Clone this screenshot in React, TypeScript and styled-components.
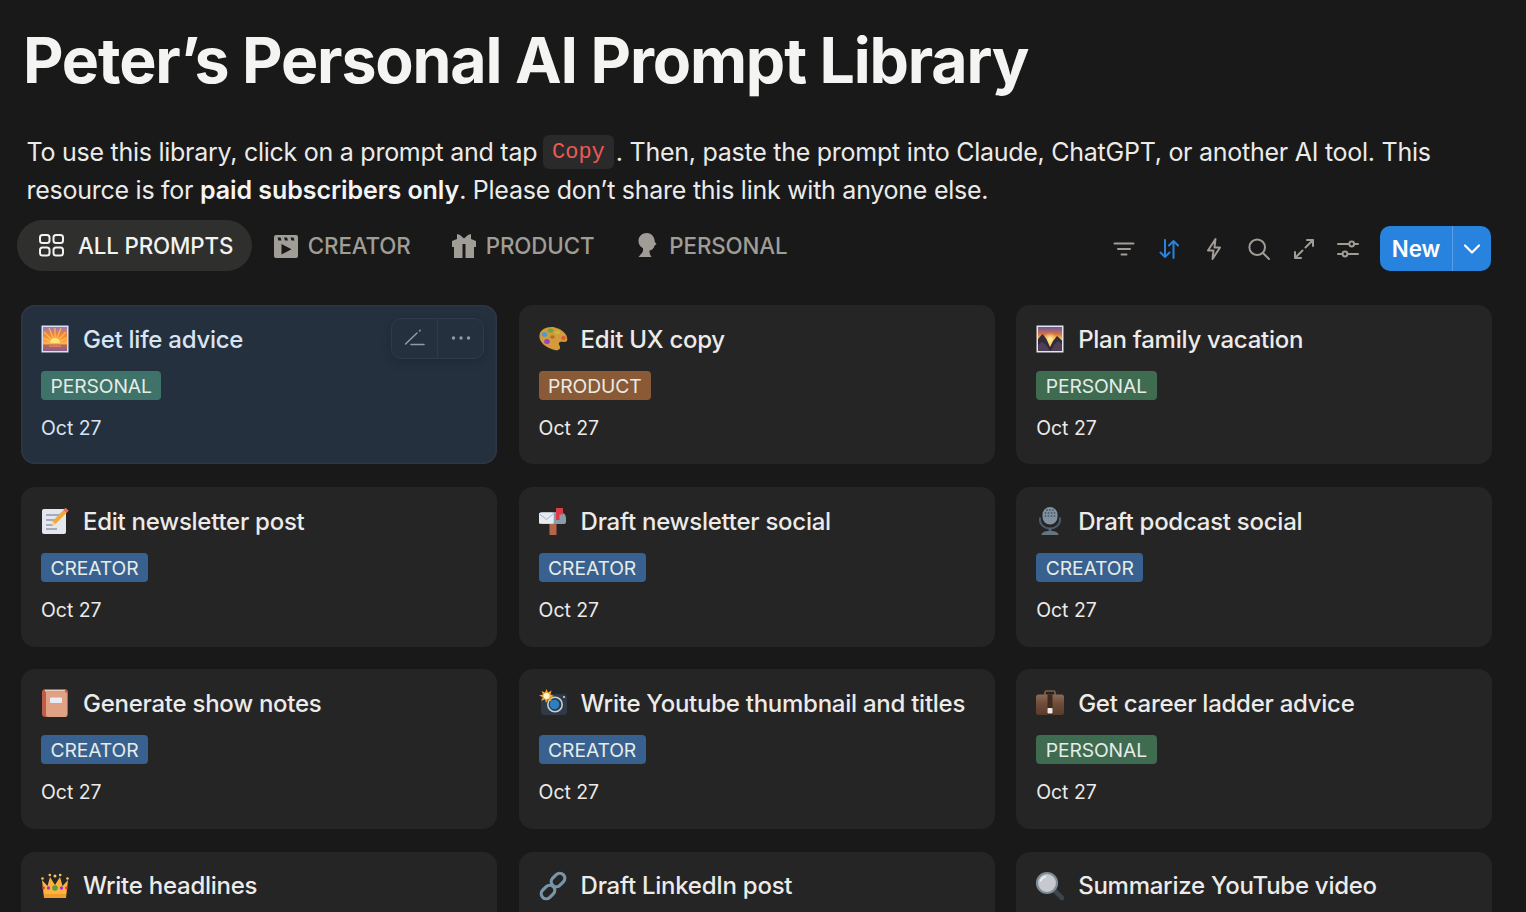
import React from "react";
import styled, { createGlobalStyle } from "styled-components";

const Global = createGlobalStyle`
  html, body { margin: 0; padding: 0; background: #191919; height: 100%; overflow: hidden; }
  body { font-family: Inter, "Liberation Sans", sans-serif; color: #f0f0ee; }
  * { box-sizing: border-box; }
`;

const Page = styled.div`
  height: 912px;
  overflow: hidden;
  background: #191919;
`;
const Title = styled.h1`
  margin: 0;
  padding: 22px 0 0 23px;
  height: 133px;
  font-size: 62.6px;
  line-height: 76px;
  font-weight: 700;
  letter-spacing: -1.17px;
  color: #f4f4f3;
  white-space: nowrap;
`;
const Intro = styled.p`
  margin: 0;
  padding: 0 80px 0 26.5px;
  font-size: 25px;
  line-height: 38px;
  letter-spacing: -0.26px;
  color: #ebebe9;
  height: 77px;
  strong { font-weight: 600; letter-spacing: -0.07px; color: #f4f4f3; }
`;
const Code = styled.code`
  font-family: "Liberation Mono", monospace;
  font-size: 22px;
  line-height: 1;
  letter-spacing: 0;
  color: #ea5a54;
  background: #2a2a2a;
  border-radius: 6px;
  padding: 5px 9px 4px;
  margin: 0 2px 0 -1px;
  vertical-align: 3px;
`;
const Bar = styled.div`
  display: flex;
  align-items: center;
  justify-content: space-between;
  height: 51px;
  padding: 0 35px 0 17px;
  margin-top: 10px;
`;
const Tabs = styled.div`
  display: flex;
  align-items: center;
`;
const Tab = styled.div<{ $active?: boolean }>`
  display: flex;
  align-items: center;
  gap: ${(p) => (p.$active ? "14px" : "10px")};
  height: 51px;
  padding: 0 ${(p) => (p.$active ? "19px" : "19.5px")} 0 ${(p) => (p.$active ? "22px" : "21.5px")};
  border-radius: 26px;
  font-size: 22.3px;
  font-weight: 500;
  letter-spacing: -0.1px;
  color: ${(p) => (p.$active ? "#f2f2f0" : "#a09d96")};
  background: ${(p) => (p.$active ? "#2f2f2d" : "transparent")};
`;
const Tools = styled.div`
  display: flex;
  align-items: center;
  margin-top: 6px;
`;
const ToolGroup = styled.div`
  display: flex;
  align-items: center;
  gap: 19px;
  margin-right: 18px;
  color: #a09d96;
`;
const NewButton = styled.div`
  display: flex;
  align-items: center;
  width: 111px;
  height: 45px;
  background: #2783de;
  border-radius: 10px;
  color: #fff;
  font-size: 22.3px;
  font-weight: 600;
`;
const NewLabel = styled.span`
  width: 73px;
  height: 100%;
  display: flex;
  align-items: center;
  justify-content: center;
  border-right: 1px solid #5a9fe6;
`;
const NewCaret = styled.span`
  flex: 1;
  display: flex;
  align-items: center;
  justify-content: center;
`;
const Grid = styled.div`
  display: grid;
  grid-template-columns: repeat(3, 476.3px);
  grid-auto-rows: 159.4px;
  column-gap: 21.3px;
  row-gap: 22.8px;
  padding: 34px 0 0 21px;
`;
const Card = styled.article<{ $selected?: boolean }>`
  position: relative;
  display: flex;
  flex-direction: column;
  align-items: flex-start;
  padding: 18px 20px 0;
  border-radius: 14px;
  background: ${(p) => (p.$selected ? "#25303e" : "#252525")};
  box-shadow: ${(p) => (p.$selected ? "0 0 0 1.5px #2d3644 inset" : "none")};
  color: ${(p) => (p.$selected ? "#d9e4f2" : "#ecebe9")};
`;
const CardTitle = styled.div`
  display: flex;
  align-items: center;
  height: 32px;
  gap: 14px;
  font-size: 24px;
  font-weight: 500;
  letter-spacing: -0.26px;
  white-space: nowrap;
`;
const Tag = styled.span<{ $bg: string; $fg?: string }>`
  margin-top: 16px;
  height: 29px;
  padding: 0 9.5px;
  display: inline-flex;
  align-items: center;
  border-radius: 4px;
  font-size: 19.3px;
  letter-spacing: -0.1px;
  background: ${(p) => p.$bg};
  color: ${(p) => p.$fg ?? "#e6ece8"};
`;
const DateText = styled.div`
  margin-top: 15px;
  font-size: 19.4px;
  line-height: 26px;
`;
const Actions = styled.div`
  position: absolute;
  top: 12.5px;
  right: 13px;
  width: 93.5px;
  height: 41px;
  display: flex;
  border: 1.5px solid #2f3b4b;
  border-radius: 10px;
  background: #25303e;
  box-shadow: 0 3px 8px rgba(15, 20, 28, 0.25);
`;
const ActionCell = styled.div<{ $divider?: boolean }>`
  flex: 1;
  display: flex;
  align-items: center;
  justify-content: center;
  color: #8f9baa;
  border-right: ${(p) => (p.$divider ? "1.5px solid #2f3b4b" : "none")};
`;
const EmojiBox = styled.svg`
  width: 28px;
  height: 28px;
  flex: none;
  overflow: visible;
`;

const Sunrise = () => (
  <EmojiBox viewBox="0 0 28 28">
    <defs>
      <linearGradient id="sr" x1="0" y1="0" x2="0" y2="1">
        <stop offset="0" stopColor="#9a78c4" />
        <stop offset="0.3" stopColor="#f0813c" />
        <stop offset="0.66" stopColor="#fbb03e" />
        <stop offset="0.67" stopColor="#c9674c" />
        <stop offset="1" stopColor="#8a5f8a" />
      </linearGradient>
    </defs>
    <rect x="0.5" y="0.5" width="27" height="27" fill="#d8e2f2" />
    <rect x="2" y="2" width="24" height="24" fill="url(#sr)" />
    <g stroke="#fdc257" strokeWidth="1.2" opacity="0.9">
      <path d="M14 18L3 7M14 18L8 3M14 18V3M14 18L20 3M14 18L25 7M14 18L2.500 13M14 18L25.500 13" />
    </g>
    <path d="M9 18a5 5 0 0 1 10 0z" fill="#ffe27a" />
    <rect x="2" y="18" width="24" height="1.400" fill="#f7b25a" />
    <rect x="8" y="20.500" width="12" height="1.200" fill="#e88f58" />
  </EmojiBox>
);
const Palette = () => (
  <EmojiBox viewBox="0 0 28 28">
    <path d="M0.500 10C1.500 4 9 1 16 2.500c6 1.300 12 6 12.300 11.500.2 3.400-2.800 3-5.300 2.800-2.500-.2-4 1-2.500 3.700 1.800 3.200-.5 5.500-5 4.500C7.500 23 -.8 17 0.500 10z" fill="#d59a3a" />
    <ellipse cx="5.500" cy="9.500" rx="2.800" ry="2.300" fill="#3d9fe2" />
    <ellipse cx="11.500" cy="5.500" rx="2.800" ry="2.100" fill="#58ad4a" />
    <ellipse cx="18.500" cy="7.500" rx="2.600" ry="2.100" fill="#b8c03a" />
    <ellipse cx="24.500" cy="13" rx="2.200" ry="1.900" fill="#e5533f" />
    <ellipse cx="8" cy="16.500" rx="2.800" ry="2.500" fill="#8a45c8" />
    <ellipse cx="13.500" cy="12" rx="2.300" ry="1.800" fill="#a8722c" />
  </EmojiBox>
);
const Mountain = () => (
  <EmojiBox viewBox="0 0 28 28">
    <defs>
      <linearGradient id="mt" x1="0" y1="0" x2="0" y2="1">
        <stop offset="0" stopColor="#6a55a8" />
        <stop offset="0.3" stopColor="#d9743f" />
        <stop offset="0.55" stopColor="#ffd35c" />
      </linearGradient>
      <radialGradient id="mg">
        <stop offset="0" stopColor="#fff4b8" />
        <stop offset="1" stopColor="#ffd35c" stopOpacity="0" />
      </radialGradient>
    </defs>
    <rect x="0.500" y="0.500" width="27" height="27" fill="#e2e4ee" />
    <rect x="2" y="2" width="24" height="24" fill="url(#mt)" />
    <circle cx="14" cy="14" r="7" fill="url(#mg)" />
    <path d="M2 26V14l4.500-5 4 5 3.500 8 3-6 4-5 5 4.500V26z" fill="#342a3e" />
    <path d="M2 26v-6l4-3 4 3 4 6zM26 26v-7l-4-3-4 4-3 6z" fill="#4e3f56" />
  </EmojiBox>
);
const Memo = () => (
  <EmojiBox viewBox="0 0 28 28">
    <path d="M1 4a2 2 0 0 1 2-2h20a2 2 0 0 1 2 2v21a2 2 0 0 1-2 2H3a2 2 0 0 1-2-2z" fill="#e4e8ee" />
    <path d="M5 8h15M5 13h10M5 18h7M5 22h11" stroke="#8a99aa" strokeWidth="1.500" />
    <path d="M24.500 1l3 2.700-13 13.200-4 1.400 1.200-4.200z" fill="#f3a83a" />
    <path d="M24.500 1l3 2.700-2 2-3-2.700z" fill="#e56a6a" />
    <path d="M10.500 18.300l1.200-4.200 2.800 2.800z" fill="#f4d4a0" />
  </EmojiBox>
);
const Mailbox = () => (
  <EmojiBox viewBox="0 0 28 28">
    <rect x="10.500" y="16" width="7" height="12" fill="#b5654a" />
    <path d="M8 5h13a6 6 0 0 1 6 6v4a2 2 0 0 1-2 2H8z" fill="#8a9bab" />
    <rect x="0" y="5" width="15" height="12" rx="3" fill="#b8c6d2" />
    <rect x="0" y="6" width="14.500" height="10.500" fill="#e8ecf0" />
    <path d="M0.500 7l7 5.500L14 7" fill="none" stroke="#a4b2c0" strokeWidth="1" />
    <path d="M17 1h7v6.500h-3.500V13H17z" fill="#e03a45" />
  </EmojiBox>
);
const Mic = () => (
  <EmojiBox viewBox="0 0 28 28">
    <rect x="6.500" y="0" width="15" height="17.500" rx="7.500" fill="#8191a0" />
    <g fill="#4f5d6e">
      <circle cx="11" cy="3" r="0.900" /><circle cx="14" cy="3" r="0.900" /><circle cx="17" cy="3" r="0.900" />
      <circle cx="9.500" cy="6" r="0.900" /><circle cx="12.500" cy="6" r="0.900" /><circle cx="15.500" cy="6" r="0.900" /><circle cx="18.500" cy="6" r="0.900" />
      <circle cx="9.500" cy="9" r="0.900" /><circle cx="12.500" cy="9" r="0.900" /><circle cx="15.500" cy="9" r="0.900" /><circle cx="18.500" cy="9" r="0.900" />
    </g>
    <path d="M4 10.500V13a10 8.500 0 0 0 20 0v-2.500" fill="none" stroke="#4c5967" strokeWidth="2" />
    <rect x="12.500" y="21" width="3" height="3.500" fill="#55636f" />
    <path d="M5.500 28c0-2.500 3-4 8.500-4s8.500 1.500 8.500 4z" fill="#66757f" />
  </EmojiBox>
);
const Book = () => (
  <EmojiBox viewBox="0 0 28 28">
    <rect x="1" y="0" width="26" height="28" rx="3.500" fill="#bd5f48" />
    <path d="M5 3h19a2 2 0 0 1 2 2v21a2 2 0 0 1-2 2H7.500A2.500 2.500 0 0 1 5 25.500z" fill="#e0a184" />
    <path d="M4 1.800h20" stroke="#eed3c4" strokeWidth="1.500" />
    <rect x="9" y="8.500" width="12" height="5.500" rx="1" fill="#e8edf2" />
  </EmojiBox>
);
const Camera = () => (
  <EmojiBox viewBox="0 0 28 28">
    <rect x="2" y="5" width="26" height="21" rx="3.500" fill="#2f3a46" />
    <circle cx="16" cy="15.500" r="7.200" fill="none" stroke="#c2d0da" strokeWidth="1.600" />
    <circle cx="15.500" cy="15.500" r="4.800" fill="#2d7fc0" />
    <circle cx="25" cy="8" r="1" fill="#d6dde2" />
    <path d="M7.500 0l1.500 3.500L12.500 1.500 11.500 5.500 15 7l-3.500 1.500 1 4-3.500-2.200L7 14l-1-3.700-4 1.500 2-3.500L0 6.500l4-1L2.500 2 6 3.500z" fill="#f7a934" />
    <circle cx="7.500" cy="7" r="3" fill="#fff6c8" />
  </EmojiBox>
);
const Briefcase = () => (
  <EmojiBox viewBox="0 0 28 28">
    <defs>
      <linearGradient id="bc" x1="0" y1="0" x2="0" y2="1">
        <stop offset="0" stopColor="#8d6b55" />
        <stop offset="0.45" stopColor="#6e4c3a" />
        <stop offset="1" stopColor="#5a3b2c" />
      </linearGradient>
    </defs>
    <path d="M9 6V3.500A1.500 1.500 0 0 1 10.500 2h7A1.500 1.500 0 0 1 19 3.500V6" fill="none" stroke="#7f5e4a" strokeWidth="1.700" />
    <rect x="0" y="5.500" width="28" height="20.500" rx="2.500" fill="url(#bc)" />
    <rect x="11.500" y="5.500" width="5" height="20.500" fill="#3f2a1f" />
    <rect x="11.500" y="19" width="5" height="5.500" rx="0.800" fill="#ecebe6" />
  </EmojiBox>
);
const Crown = () => (
  <EmojiBox viewBox="0 0 28 28">
    <path d="M1 8l5.500 6L9 5l5 8 5-8 2.500 9L27 8l-2 18H3z" fill="#fdb43c" />
    <rect x="3" y="22" width="22" height="4" fill="#f29b2e" />
    <circle cx="14" cy="4" r="1.500" fill="#fdc95c" />
    <circle cx="8.800" cy="3" r="1.300" fill="#fdc95c" />
    <circle cx="19.200" cy="3" r="1.300" fill="#fdc95c" />
    <circle cx="1.500" cy="6.500" r="1.300" fill="#fdc95c" />
    <circle cx="26.500" cy="6.500" r="1.300" fill="#fdc95c" />
    <circle cx="14" cy="16" r="2.800" fill="#5f9c3c" />
    <circle cx="7.500" cy="16" r="1.700" fill="#a030e0" />
    <circle cx="20.500" cy="16" r="1.700" fill="#a030e0" />
    <circle cx="2.500" cy="16" r="1.400" fill="#e03050" />
    <circle cx="25.500" cy="16" r="1.400" fill="#e03050" />
  </EmojiBox>
);
const LinkIcon = () => (
  <EmojiBox viewBox="0 0 28 28">
    <g fill="none" stroke="#7b95a8" strokeWidth="3.200">
      <rect x="11.500" y="3" width="15" height="10" rx="5" transform="rotate(-45 19 8)" />
      <rect x="1.500" y="15" width="15" height="10" rx="5" transform="rotate(-45 9 20)" />
    </g>
  </EmojiBox>
);
const Magnifier = () => (
  <EmojiBox viewBox="0 0 28 28">
    <path d="M18 18l8 8" stroke="#3a454e" strokeWidth="4.600" strokeLinecap="round" />
    <circle cx="11" cy="11" r="10" fill="#c6cace" stroke="#7d8c99" strokeWidth="2.200" />
    <path d="M4.500 9a7 7 0 0 1 5-4.500" fill="none" stroke="#eef1f3" strokeWidth="1.600" strokeLinecap="round" />
  </EmojiBox>
);

const Svg = styled.svg`
  flex: none;
  display: block;
`;
const GridIcon = () => (
  <Svg width="25" height="25" viewBox="0 0 25 25" fill="none" stroke="currentColor" strokeWidth="2">
    <rect x="1" y="2" width="9.500" height="8" rx="2.500" />
    <rect x="14.500" y="2" width="9.500" height="8" rx="2.500" />
    <rect x="1" y="14.500" width="9.500" height="8" rx="2.500" />
    <rect x="14.500" y="14.500" width="9.500" height="8" rx="2.500" />
  </Svg>
);
const ClapIcon = () => (
  <Svg width="24" height="24" viewBox="0 0 24 24">
    <path fill="currentColor" fillRule="evenodd" d="M0 3a2 2 0 0 1 2-2h20a2 2 0 0 1 2 2v19a2 2 0 0 1-2 2H2a2 2 0 0 1-2-2zM3.500 3.500l1 3h3l-1-3zM10 3.500l1 3h3l-1-3zM16.500 3.500l1 3h3l-1-3zM7.500 10v10.500l10-5.200z" />
  </Svg>
);
const GiftIcon = () => (
  <Svg width="24" height="26" viewBox="0 0 24 26">
    <path fill="currentColor" d="M0 8l5-2V1l3 1 4 3.500L16 2l3-1v5l5 2v6h-2v11H2V14H0z" />
    <rect x="10.500" y="11" width="3" height="14" fill="#191919" />
  </Svg>
);
const PersonIcon = () => (
  <Svg width="24" height="26" viewBox="0 0 24 26">
    <path fill="currentColor" d="M12 0C7 0 3.500 3.500 3.500 8c0 3.500 2 6 4.500 7.200V18c-1 2.500-3 4-4.500 6h13c-1.500-2-2-4-2-6.500 2.500-.2 4.500-2 5-4.700l2-1.800-1.700-2C19.800 4 16.500 0 12 0z" />
  </Svg>
);
const Tool = ({ children }: { children: React.ReactNode }) => (
  <Svg width="26" height="26" viewBox="0 0 26 26" fill="none" stroke="currentColor" strokeWidth="2" strokeLinecap="round" strokeLinejoin="round">
    {children}
  </Svg>
);
const SortTool = styled.span`
  color: #2783de;
  display: flex;
`;

const PencilIcon = () => (
  <Svg width="22" height="22" viewBox="0 0 22 22" fill="none" stroke="currentColor" strokeWidth="1.500" strokeLinecap="round">
    <path d="M2.500 17L14 6" />
    <path d="M8 17.500h13" />
    <path d="M16.500 4l.6-.6" />
  </Svg>
);
const DotsIcon = () => (
  <Svg width="22" height="6" viewBox="0 0 22 6" fill="currentColor">
    <circle cx="3.500" cy="3" r="1.700" /><circle cx="11" cy="3" r="1.700" /><circle cx="18.500" cy="3" r="1.700" />
  </Svg>
);

type Kind = "PERSONAL" | "CREATOR" | "PRODUCT";
const tagColors: Record<Kind, string> = { PERSONAL: "#3f6b50", CREATOR: "#38618f", PRODUCT: "#8a5a36" };

const prompts: { title: string; icon: React.FC; tag: Kind; selected?: boolean }[] = [
  { title: "Get life advice", icon: Sunrise, tag: "PERSONAL", selected: true },
  { title: "Edit UX copy", icon: Palette, tag: "PRODUCT" },
  { title: "Plan family vacation", icon: Mountain, tag: "PERSONAL" },
  { title: "Edit newsletter post", icon: Memo, tag: "CREATOR" },
  { title: "Draft newsletter social", icon: Mailbox, tag: "CREATOR" },
  { title: "Draft podcast social", icon: Mic, tag: "CREATOR" },
  { title: "Generate show notes", icon: Book, tag: "CREATOR" },
  { title: "Write Youtube thumbnail and titles", icon: Camera, tag: "CREATOR" },
  { title: "Get career ladder advice", icon: Briefcase, tag: "PERSONAL" },
  { title: "Write headlines", icon: Crown, tag: "CREATOR" },
  { title: "Draft LinkedIn post", icon: LinkIcon, tag: "CREATOR" },
  { title: "Summarize YouTube video", icon: Magnifier, tag: "PERSONAL" },
];

export default function App() {
  return (
    <Page>
      <Global />
      <Title>Peter’s Personal AI Prompt Library</Title>
      <Intro>
        To use this library, click on a prompt and tap <Code>Copy</Code>. Then, paste the prompt into Claude, ChatGPT, or another AI tool. This resource is for <strong>paid subscribers only</strong>. Please don’t share this link with anyone else.
      </Intro>
      <Bar>
        <Tabs>
          <Tab $active><GridIcon />ALL PROMPTS</Tab>
          <Tab><ClapIcon />CREATOR</Tab>
          <Tab><GiftIcon />PRODUCT</Tab>
          <Tab><PersonIcon />PERSONAL</Tab>
        </Tabs>
        <Tools>
          <ToolGroup>
            <Tool><path d="M3.500 7.500h19M7 13h12M10.500 18.500h5" /></Tool>
            <SortTool>
              <Tool>
                <path d="M9 4v17M4.500 16.500L9 21l4.500-4.500" />
                <path d="M17.500 22V5M13 9.500L17.500 5 22 9.500" />
              </Tool>
            </SortTool>
            <Tool><path d="M14.500 3L7 14.500h5.500L11.500 23l7.500-11.500h-5.500z" /></Tool>
            <Tool><circle cx="11.200" cy="11.200" r="7.800" /><path d="M17 17l6 6" /></Tool>
            <Tool><path d="M14.500 11.500L22 4M16 4h6v6M11.500 14.500L4 22M4 16v6h6" /></Tool>
            <Tool><path d="M2 8h20M2 18h20" /><circle cx="15.700" cy="8" r="2.400" fill="#191919" /><circle cx="9" cy="18" r="2.400" fill="#191919" /></Tool>
          </ToolGroup>
          <NewButton>
            <NewLabel>New</NewLabel>
            <NewCaret>
              <Svg width="18" height="12" viewBox="0 0 18 12" fill="none" stroke="currentColor" strokeWidth="2.200" strokeLinecap="round" strokeLinejoin="round">
                <path d="M2 2.500l7 7 7-7" />
              </Svg>
            </NewCaret>
          </NewButton>
        </Tools>
      </Bar>
      <Grid>
        {prompts.map((p) => {
          const Icon = p.icon;
          return (
            <Card key={p.title} $selected={p.selected}>
              <CardTitle><Icon />{p.title}</CardTitle>
              <Tag $bg={p.selected ? "#3f7268" : tagColors[p.tag]}>{p.tag}</Tag>
              <DateText>Oct 27</DateText>
              {p.selected && (
                <Actions>
                  <ActionCell $divider><PencilIcon /></ActionCell>
                  <ActionCell><DotsIcon /></ActionCell>
                </Actions>
              )}
            </Card>
          );
        })}
      </Grid>
    </Page>
  );
}
